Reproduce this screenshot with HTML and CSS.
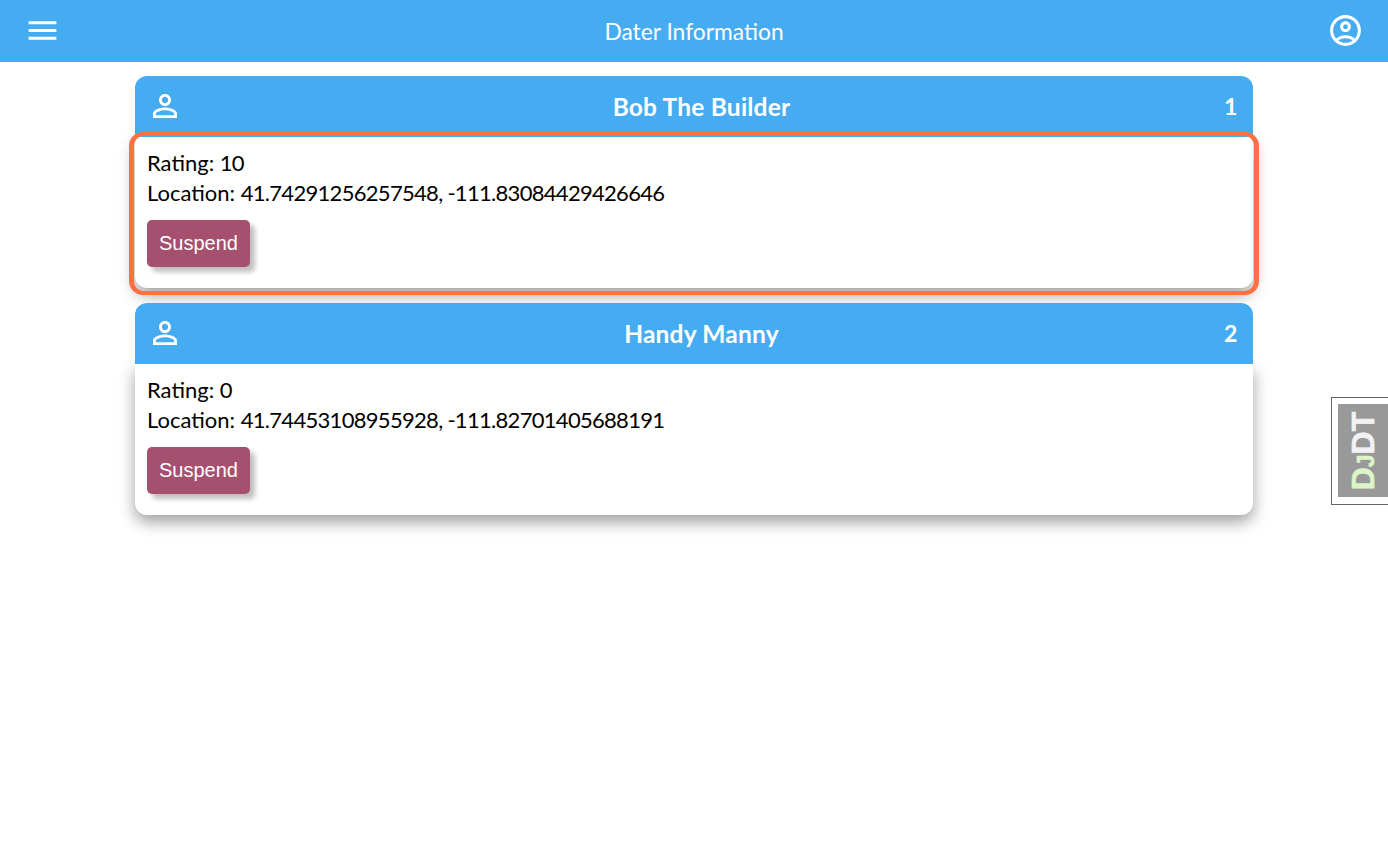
FILE: index.html
```html
<!DOCTYPE html>
<html lang="en">
<head>
<meta charset="utf-8">
<title>Dater Information</title>
<link rel="stylesheet" href="styles.css">
</head>
<body>
<header class="topbar">
  <svg class="top-icon" viewBox="0 0 24 24"><path d="M3 18h18v-2H3v2zm0-5h18v-2H3v2zm0-7v2h18V6H3z"/></svg>
  <h1 class="page-title">Dater Information</h1>
  <svg class="top-icon" viewBox="0 0 24 24"><path d="M12 2C6.48 2 2 6.48 2 12s4.48 10 10 10 10-4.48 10-10S17.52 2 12 2zM7.35 18.5C8.66 17.56 10.26 17 12 17s3.34.56 4.65 1.5c-1.31.94-2.91 1.5-4.65 1.5s-3.34-.56-4.65-1.5zm10.79-1.38C16.45 15.8 14.32 15 12 15s-4.45.8-6.14 2.12C4.7 15.73 4 13.95 4 12c0-4.42 3.58-8 8-8s8 3.58 8 8c0 1.95-.7 3.73-1.86 5.12z"/><path d="M12 6c-1.93 0-3.5 1.57-3.5 3.5S10.07 13 12 13s3.5-1.57 3.5-3.5S13.93 6 12 6zm0 5c-.83 0-1.5-.67-1.5-1.5S11.17 8 12 8s1.5.67 1.5 1.5S12.83 11 12 11z"/></svg>
</header>
<main class="cards">
  <article class="card">
    <div class="card-head">
      <svg class="person-icon" viewBox="0 0 24 24"><path d="M12 5.9c1.16 0 2.1.94 2.1 2.1s-.94 2.1-2.1 2.1S9.9 9.16 9.9 8s.94-2.1 2.1-2.1m0 9c2.97 0 6.1 1.46 6.1 2.1v1.1H5.9V17c0-.64 3.13-2.1 6.1-2.1M12 4C9.79 4 8 5.79 8 8s1.79 4 4 4 4-1.79 4-4-1.79-4-4-4zm0 9c-2.67 0-8 1.34-8 4v3h16v-3c0-2.66-5.33-4-8-4z"/></svg>
      <h2 class="card-title">Bob The Builder</h2>
      <span class="card-num">1</span>
    </div>
    <div class="card-body focused">
      <div class="line">Rating: <span class="value">10</span></div>
      <div class="line">Location: <span class="value">41.74291256257548, -111.83084429426646</span></div>
      <button class="suspend" type="button">Suspend</button>
    </div>
  </article>
  <article class="card">
    <div class="card-head">
      <svg class="person-icon" viewBox="0 0 24 24"><path d="M12 5.9c1.16 0 2.1.94 2.1 2.1s-.94 2.1-2.1 2.1S9.9 9.16 9.9 8s.94-2.1 2.1-2.1m0 9c2.97 0 6.1 1.46 6.1 2.1v1.1H5.9V17c0-.64 3.13-2.1 6.1-2.1M12 4C9.79 4 8 5.79 8 8s1.79 4 4 4 4-1.79 4-4-1.79-4-4-4zm0 9c-2.67 0-8 1.34-8 4v3h16v-3c0-2.66-5.33-4-8-4z"/></svg>
      <h2 class="card-title">Handy Manny</h2>
      <span class="card-num">2</span>
    </div>
    <div class="card-body">
      <div class="line">Rating: <span class="value">0</span></div>
      <div class="line">Location: <span class="value">41.74453108955928, -111.82701405688191</span></div>
      <button class="suspend" type="button">Suspend</button>
    </div>
  </article>
</main>
<aside class="djdt"><div class="djdt-inner"><span class="djdt-label"><span class="dj">D</span><span class="dj dj-small">J</span>DT</span></div></aside>
</body>
</html>
```
FILE: styles.css
```css
* { box-sizing: border-box; }
html, body { margin: 0; height: 100%; }
body { background: #fff; font-family: "Lato", "Liberation Sans", sans-serif; color: #000; }

.topbar {
  height: 62px;
  background: #46acf2;
  display: flex;
  align-items: center;
  justify-content: space-between;
  padding: 0 24px 1px;
  color: #fff;
}
.top-icon { width: 37px; height: 37px; fill: #fff; display: block; }
.page-title { margin: 0; font-size: 22.8px; font-weight: 400; color: #fff; }

.cards {
  width: 1118px;
  margin: 14px 0 0 135px;
  display: flex;
  flex-direction: column;
  gap: 15px;
}
.card {
  height: 212px;
  display: flex;
  flex-direction: column;
}
.card-head {
  position: relative;
  z-index: 1;
  height: 61px;
  flex: none;
  background: #46acf2;
  border-radius: 12px 12px 0 0;
  display: flex;
  align-items: center;
  padding: 0 16px 1px 12px;
  color: #fff;
}
.person-icon { width: 36px; height: 36px; fill: #fff; flex: none; }
.card-title { flex: 1; margin: 0; padding-right: 4px; text-align: center; font-size: 24.5px; font-weight: 700; letter-spacing: 0.2px; color: #fff; }
.card-num { width: 13px; text-align: center; font-size: 23px; font-weight: 700; }
.card-body {
  flex: 1;
  position: relative;
  background: #fff;
  border-radius: 0 0 12px 12px;
  padding: 11px 12px 0;
  box-shadow: 0 7px 16px rgba(0, 0, 0, 0.38);
}
.card-body.focused::after {
  content: "";
  position: absolute;
  z-index: 2;
  inset: -5px -6px -7px;
  border: solid #ff7043;
  border-width: 4px 5px;
  border-radius: 14px;
  pointer-events: none;
}
.line { font-size: 22px; line-height: 30px; }
.value { letter-spacing: -0.7px; }
.suspend {
  display: block;
  margin-top: 12px;
  width: 103px;
  height: 47px;
  padding: 0;
  border: 0;
  border-radius: 5px;
  background: #a4506e;
  color: #fff;
  font-family: "Liberation Sans", Arial, sans-serif;
  font-size: 20px;
  box-shadow: 5px 5px 5px rgba(0, 0, 0, 0.25);
}

.djdt {
  position: fixed;
  right: 0;
  top: 397px;
  width: 57px;
  height: 108px;
  background: #fff;
  border: 1px solid #666;
  border-right: 0;
  padding: 6px 0 7px 6px;
}
.djdt-inner {
  height: 100%;
  background: #999;
  display: flex;
  align-items: center;
  justify-content: center;
}
.djdt-label {
  display: block;
  transform: rotate(-90deg);
  font-family: "Liberation Sans", sans-serif;
  font-weight: 700;
  font-size: 32px;
  line-height: 1;
  color: #f2f2f2;
  -webkit-text-stroke: 0.6px currentColor;
  white-space: nowrap;
}
.dj { color: #dcf5c8; }
.dj-small { font-size: 23px; }
```
